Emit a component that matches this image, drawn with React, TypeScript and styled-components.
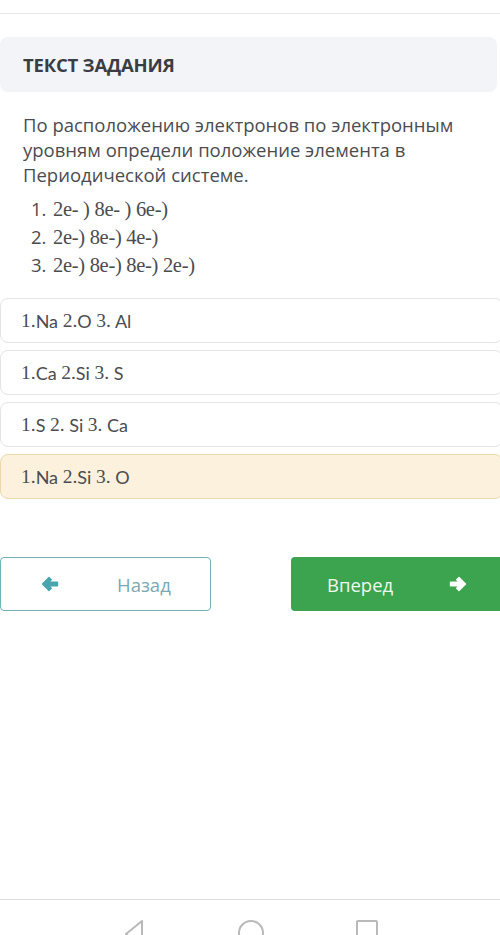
import React from "react";
import styled, { createGlobalStyle } from "styled-components";

const Global = createGlobalStyle`
  html, body { margin: 0; padding: 0; background: #ffffff; }
  body { font-family: "Open Sans", "Noto Sans", sans-serif; overflow-x: hidden; }
  * { box-sizing: border-box; }
`;

const Page = styled.div`
  display: flex;
  flex-direction: column;
  min-height: 935px;
  width: 500px;
  overflow: hidden;
`;

const TopStrip = styled.div`
  height: 14px;
  border-bottom: 1px solid #e6e7ea;
`;

const Main = styled.main`
  flex: 1;
  display: flex;
  flex-direction: column;
`;

const Header = styled.div`
  margin-top: 23px;
  margin-right: 3px;
  height: 55px;
  background: #f3f4f7;
  border-radius: 8px;
  display: flex;
  align-items: center;
  padding-left: 23px;
`;

const Title = styled.h2`
  margin: 0;
  font-family: "Open Sans", sans-serif;
  font-weight: 700;
  font-size: 18.5px;
  color: #3a3d44;
  letter-spacing: -0.2px;
`;

const Body = styled.div`
  padding: 20px 23px 0 23px;
`;

const Para = styled.p`
  margin: 0;
  font-size: 18.5px;
  line-height: 25px;
  color: #4b4c50;
`;

const List = styled.ol`
  margin: 8px 0 0 0;
  padding: 0 0 0 8px;
  list-style: none;
`;

const Item = styled.li`
  display: flex;
  align-items: baseline;
  height: 28px;
  line-height: 28px;
  color: #4b4c50;
`;

const ItemNum = styled.span`
  font-family: "Open Sans", sans-serif;
  font-size: 18.5px;
  width: 22px;
`;

const Math = styled.span`
  font-family: "Liberation Serif", "DejaVu Serif", serif;
  font-size: 20.5px;
  letter-spacing: -0.3px;
`;

const Options = styled.div`
  margin-top: 19px;
  margin-right: -3px;
  display: flex;
  flex-direction: column;
  gap: 7px;
`;

const Option = styled.div<{ $selected?: boolean }>`
  height: 45px;
  border-radius: 8px;
  border: 1px solid ${(p) => (p.$selected ? "#ecd9ab" : "#e3e4e6")};
  background: ${(p) => (p.$selected ? "#fbf1dc" : "#ffffff")};
  display: flex;
  align-items: center;
  padding-left: 20px;
  font-family: "Lato", "Open Sans", sans-serif;
  font-size: 18px;
  color: #4b4c50;
  white-space: pre;
`;

const Num = styled.span`
  font-family: "Liberation Serif", "DejaVu Serif", serif;
  font-size: 19.5px;
`;

const Buttons = styled.div`
  margin-top: 58px;
  display: flex;
  justify-content: space-between;
  margin-right: -3px;
`;

const BackButton = styled.button`
  width: 211px;
  height: 54px;
  border: 1.5px solid #6fb2b8;
  border-radius: 4px;
  background: #ffffff;
  display: flex;
  align-items: center;
  padding: 0 0 0 40px;
  font-family: "Open Sans", sans-serif;
  font-size: 18.5px;
  color: #79a9b3;
  cursor: pointer;
  span { margin-left: 58px; }
`;

const NextButton = styled.button`
  width: 212px;
  height: 54px;
  border: none;
  border-radius: 4px;
  background: #3ca34f;
  display: flex;
  align-items: center;
  padding: 0 0 0 36px;
  font-family: "Open Sans", sans-serif;
  font-size: 18.5px;
  color: #eefaf0;
  cursor: pointer;
  svg { margin-left: 56px; }
`;

const Arrow = styled.svg`
  width: 18px;
  height: 16px;
  display: block;
`;

const NavBar = styled.nav`
  height: 36px;
  border-top: 1px solid #dcdcdc;
  display: flex;
  justify-content: center;
  align-items: flex-start;
  gap: 92px;
  padding-top: 20px;
  padding-left: 2px;
`;

const NavIcon = styled.svg`
  width: 24px;
  height: 24px;
  overflow: visible;
`;

const ArrowIcon = ({ dir, color }: { dir: "left" | "right"; color: string }) => (
  <Arrow viewBox="0 0 18 16" style={dir === "right" ? { transform: "scaleX(-1)" } : undefined}>
    <path
      d="M8 1.5 L1.5 8 L8 14.5 L10.3 12.2 L7.5 9.7 H16.5 V6.3 H7.5 L10.3 3.8 Z"
      fill={color}
      stroke={color}
      strokeWidth="1.4"
      strokeLinejoin="round"
    />
  </Arrow>
);

const options = [
  ["1.", "Na ", "2.", "O ", "3.", " Al"],
  ["1.", "Ca ", "2.", "Si ", "3.", " S"],
  ["1.", "S ", "2.", " Si ", "3.", " Ca"],
  ["1.", "Na ", "2.", "Si ", "3.", " O"],
];

export default function App() {
  return (
    <Page>
      <Global />
      <TopStrip />
      <Main>
        <Header>
          <Title>ТЕКСТ ЗАДАНИЯ</Title>
        </Header>
        <Body>
          <Para>
            По расположению электронов по электронным уровням определи положение элемента в Периодической системе.
          </Para>
          <List>
            <Item><ItemNum>1.</ItemNum><Math>2e- ) 8e- ) 6e-)</Math></Item>
            <Item><ItemNum>2.</ItemNum><Math>2e-) 8e-) 4e-)</Math></Item>
            <Item><ItemNum>3.</ItemNum><Math>2e-) 8e-) 8e-) 2e-)</Math></Item>
          </List>
        </Body>
        <Options>
          {options.map((o, i) => (
            <Option key={i} $selected={i === 3}>
              <Num>{o[0]}</Num>{o[1]}<Num>{o[2]}</Num>{o[3]}<Num>{o[4]}</Num>{o[5]}
            </Option>
          ))}
        </Options>
        <Buttons>
          <BackButton>
            <ArrowIcon dir="left" color="#48a5ad" />
            <span>Назад</span>
          </BackButton>
          <NextButton>
            <span>Вперед</span>
            <ArrowIcon dir="right" color="#ffffff" />
          </NextButton>
        </Buttons>
      </Main>
      <NavBar>
        <NavIcon viewBox="0 0 24 24">
          <path d="M19 1 L3 14 L19 27 Z" fill="none" stroke="#b9b9b9" strokeWidth="2" strokeLinejoin="round" />
        </NavIcon>
        <NavIcon viewBox="0 0 24 24">
          <circle cx="12" cy="13" r="12" fill="none" stroke="#b9b9b9" strokeWidth="2" />
        </NavIcon>
        <NavIcon viewBox="0 0 24 24">
          <rect x="2" y="1" width="20" height="24" rx="1" fill="none" stroke="#b9b9b9" strokeWidth="2" />
        </NavIcon>
      </NavBar>
    </Page>
  );
}
